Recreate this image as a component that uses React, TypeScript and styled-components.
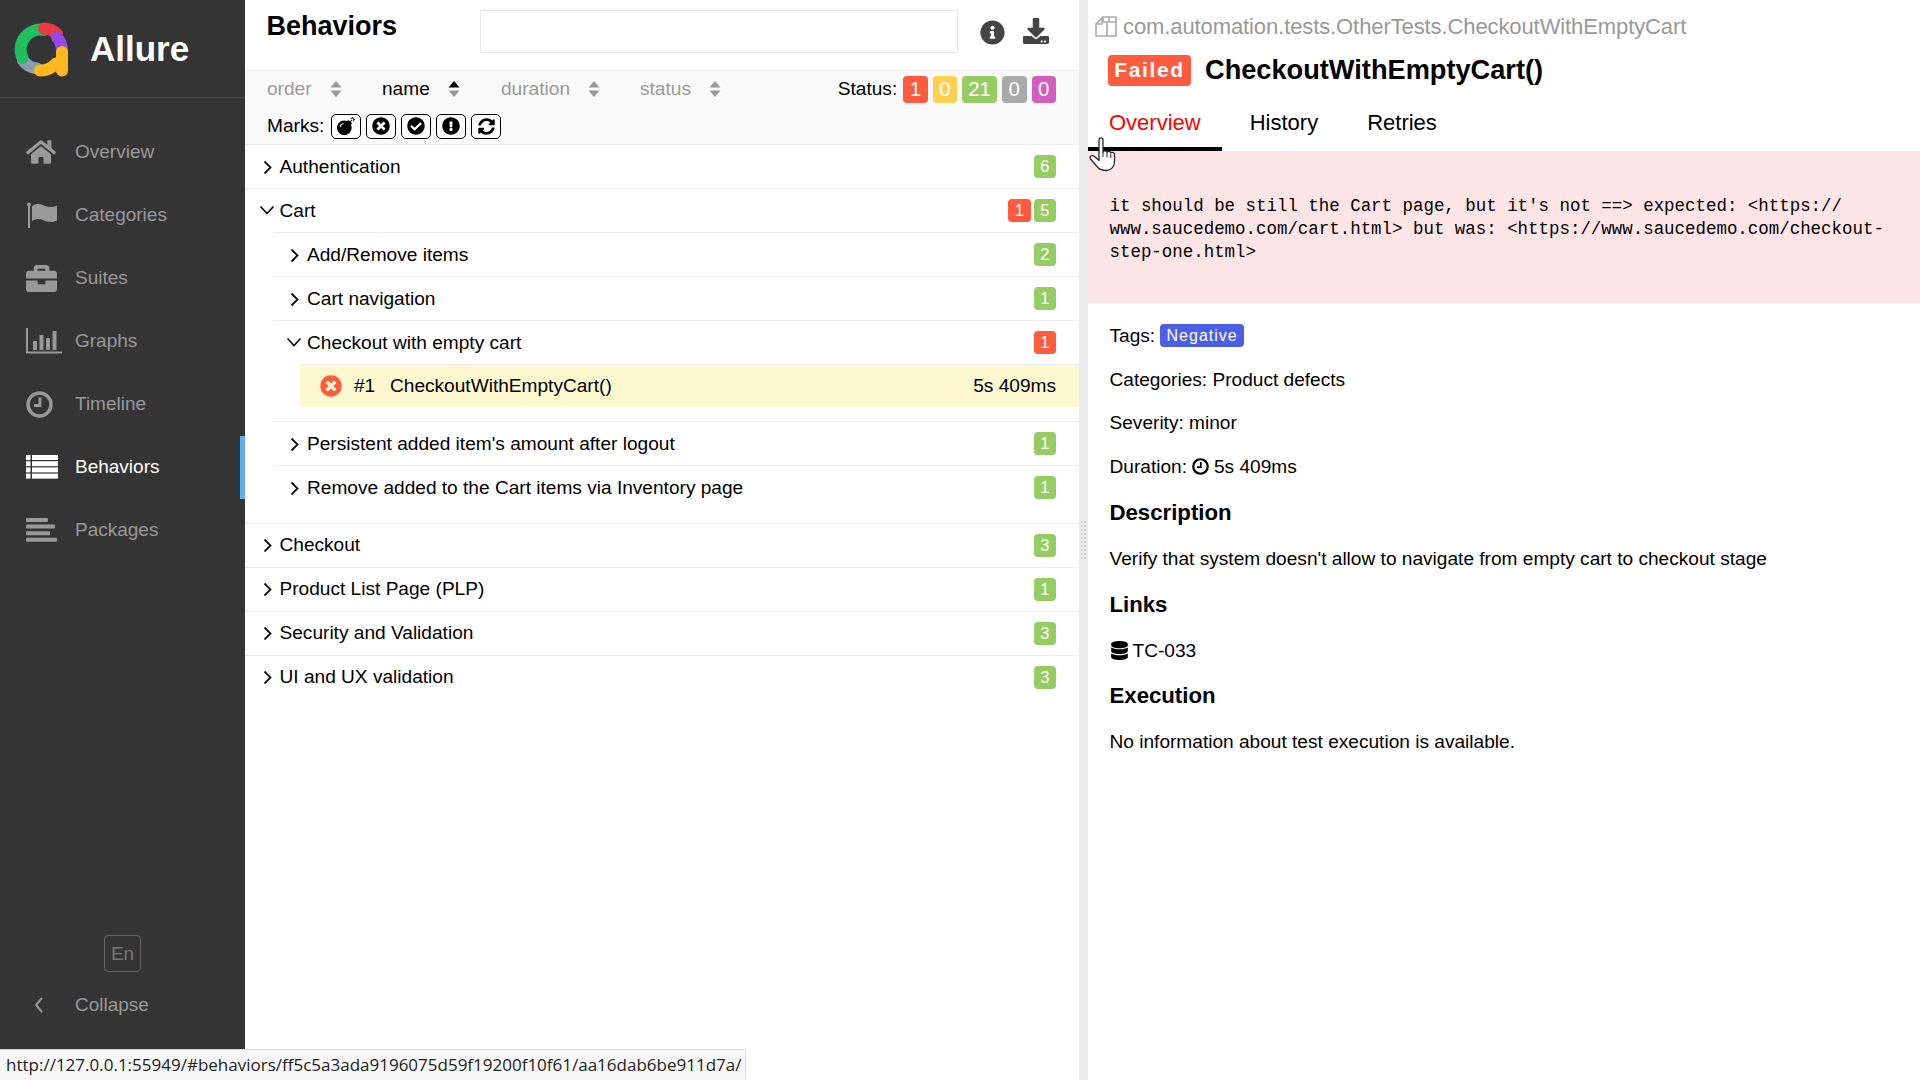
import React from 'react';
import styled, { createGlobalStyle } from 'styled-components';
import { FaHome, FaBriefcase, FaInfoCircle, FaDownload, FaBomb, FaTimesCircle, FaCheckCircle, FaExclamationCircle, FaSyncAlt, FaDatabase } from 'react-icons/fa';

const Global = createGlobalStyle`
  html, body { margin: 0; padding: 0; height: 100%; background: #fff; }
  body { font-family: "Liberation Sans", Arial, sans-serif; font-size: 19.1px; color: #000; }
  * { box-sizing: border-box; }
`;

const Page = styled.div`
  position: relative;
  display: grid;
  grid-template-columns: 245px 834px 9px 1fr;
  width: 1920px;
  height: 1080px;
  overflow: hidden;
`;

/* Sidebar */
const Sidebar = styled.aside`
  display: flex;
  flex-direction: column;
  background: #343434;
  height: 100%;
`;
const Brand = styled.div`
  display: flex;
  align-items: center;
  gap: 21px;
  height: 98px;
  padding-left: 13px;
  border-bottom: 1px solid #4a4a4a;
`;
const BrandName = styled.span`
  color: #fff;
  font-size: 35px;
  font-weight: 700;
  line-height: 1;
`;
const Nav = styled.nav`
  display: flex;
  flex-direction: column;
  padding-top: 22.5px;
`;
const NavItem = styled.div<{ $active?: boolean }>`
  display: flex;
  align-items: center;
  height: 63px;
  padding-left: 26px;
  color: ${p => (p.$active ? '#fff' : '#999')};
  font-size: 19px;
  border-right: 5px solid ${p => (p.$active ? '#5db0f3' : 'transparent')};
`;
const NavIcon = styled.span`
  display: flex;
  align-items: center;
  width: 49px;
  svg { display: block; }
`;
const SideFooter = styled.div`
  margin-top: auto;
  display: flex;
  flex-direction: column;
  padding-bottom: 44px;
`;
const LangBox = styled.div`
  align-self: flex-start;
  margin-left: 104px;
  width: 37px;
  height: 37px;
  display: flex;
  align-items: center;
  justify-content: center;
  color: #777;
  font-size: 19px;
  border: 1px solid #666;
  border-radius: 4px;
  margin-bottom: 1px;
`;
const CollapseIcon = styled.span`
  display: flex;
  width: 49px;
  padding-left: 7px;
`;

/* Main pane */
const Main = styled.main`
  display: flex;
  flex-direction: column;
  min-width: 0;
  background: #fff;
`;
const Header = styled.header`
  display: flex;
  align-items: flex-start;
  height: 70px;
  padding-left: 21.5px;
`;
const Heading = styled.h1`
  margin: 9px 0 0;
  width: 213.5px;
  font-size: 27px;
  line-height: 34px;
  font-weight: 700;
`;
const Search = styled.div`
  margin-top: 10px;
  width: 478px;
  height: 43px;
  border: 1px solid #e6e6e6;
`;
const HeaderIcon = styled.span<{ $gap: number; $top: number }>`
  display: flex;
  margin: ${p => p.$top}px 0 0 ${p => p.$gap}px;
  color: #444;
`;
const Toolbar = styled.div`
  background: #fafafa;
  border-top: 1px solid #e9edf0;
  height: 74px;
`;
const SortRow = styled.div`
  display: flex;
  align-items: center;
  height: 36px;
  margin-bottom: 1px;
  padding: 0 23px 0 22px;
`;
const SortItem = styled.div<{ $w: number; $on?: boolean }>`
  display: flex;
  align-items: center;
  gap: 18px;
  width: ${p => p.$w}px;
  color: ${p => (p.$on ? '#000' : '#999')};
`;
const StatusGroup = styled.div`
  margin-left: auto;
  display: flex;
  align-items: center;
  gap: 5px;
`;
const StatusLabel = styled.span`
  margin-right: 1px;
`;
const Badge = styled.span<{ $c: string }>`
  display: inline-flex;
  align-items: center;
  justify-content: center;
  min-width: 24.5px;
  height: 27px;
  padding: 0 6px;
  background: ${p => p.$c};
  color: #fff;
  font-size: 20.5px;
  border-radius: 4px;
`;
const CountBadge = styled(Badge)`
  min-width: 22.5px;
  height: 23px;
  padding: 0 3px;
  font-size: 16.5px;
`;
const MarksRow = styled.div`
  display: flex;
  align-items: center;
  height: 36px;
  padding-left: 22px;
  gap: 5px;
`;
const MarksLabel = styled.span`
  width: 59px;
`;
const Mark = styled.span`
  display: flex;
  align-items: center;
  justify-content: center;
  width: 30px;
  height: 25px;
  border: 1px solid #000;
  border-radius: 5px;
  background: #fff;
`;
const Row = styled.div`
  display: flex;
  align-items: center;
  height: 44px;
  padding: 0 23px 0 15.5px;
  border-top: 1px solid #e9edf0;
`;
const ChevronBox = styled.span`
  display: flex;
  justify-content: center;
  width: 14px;
  margin-right: 5px;
`;
const RowName = styled.span`
  flex: 1;
`;
const Counts = styled.span`
  display: flex;
  gap: 3px;
`;
const Children = styled.div`
  margin: 0 0 13.5px 27.5px;
`;
const TestRow = styled.div`
  display: flex;
  align-items: center;
  height: 43px;
  margin: 0 0 14px 27.5px;
  padding: 0 23px 0 20px;
  background: #fdf8cf;
  border-top: 1px solid #e9edf0;
`;
const StatusDot = styled.span`
  display: flex;
  width: 34px;
  color: #fd5a3e;
`;
const TestIndex = styled.span`
  width: 36px;
`;
const TreeEnd = styled.div`
  flex: 1;
`;

const Splitter = styled.div`
  background: #e9edf0;
  display: flex;
  align-items: center;
  justify-content: center;
`;
const Grip = styled.span`
  width: 7px;
  height: 40px;
  background-image: radial-gradient(#c9ced2 1px, transparent 1.2px);
  background-size: 3.5px 4px;
`;

/* Detail pane */
const Detail = styled.section`
  display: flex;
  flex-direction: column;
  min-width: 0;
`;
const PathRow = styled.div`
  display: flex;
  align-items: center;
  height: 52px;
  padding: 2px 0 0 7px;
  gap: 6px;
  color: #999;
  font-size: 22px;
  letter-spacing: -0.1px;
`;
const TitleRow = styled.div`
  display: flex;
  align-items: center;
  height: 36px;
  padding-left: 20px;
  gap: 14px;
`;
const FailedBadge = styled.span`
  display: inline-flex;
  align-items: center;
  justify-content: center;
  width: 83px;
  height: 31px;
  background: #fd5a3e;
  color: #fff;
  font-size: 21px;
  font-weight: 700;
  letter-spacing: 1.6px;
  border-radius: 4px;
`;
const TestTitle = styled.h2`
  margin: 0;
  font-size: 27.2px;
  font-weight: 700;
  line-height: 36px;
`;
const Tabs = styled.div`
  display: flex;
  height: 64px;
  border-bottom: 1px solid #e9edf0;
`;
const Tab = styled.div<{ $on?: boolean }>`
  display: flex;
  align-items: center;
  height: 63px;
  padding: 10px 21px 0;
  margin-left: ${p => (p.$on ? '0' : '7px')};
  font-size: 22px;
  color: ${p => (p.$on ? '#f00' : '#000')};
  border-bottom: 4px solid ${p => (p.$on ? '#000' : 'transparent')};
`;
const ErrorBlock = styled.pre`
  margin: 0;
  height: 151px;
  padding: 43px 21.5px 0;
  background: #fde5e5;
  font-family: "Liberation Mono", "DejaVu Sans Mono", monospace;
  font-size: 17.45px;
  line-height: 23px;
  white-space: pre;
`;
const Meta = styled.div`
  margin-top: 11px;
  padding-left: 21.5px;
`;
const MetaRow = styled.div`
  display: flex;
  align-items: center;
  height: 43.7px;
  gap: 5px;
`;
const Tag = styled.span`
  display: inline-flex;
  align-items: center;
  justify-content: center;
  width: 84px;
  height: 23px;
  background: #4a5ee6;
  color: #fff;
  font-size: 16px;
  letter-spacing: 1px;
  border-radius: 4px;
`;
const SectionTitle = styled.h3`
  margin: 0;
  display: flex;
  align-items: center;
  height: 46px;
  font-size: 22.2px;
  font-weight: 700;
  &:first-of-type { margin-top: 1px; }
`;
const Para = styled.div`
  display: flex;
  align-items: center;
  height: 46px;
  gap: 4px;
`;
const LastTitle = styled(SectionTitle)`
  height: 45px;
`;

/* Overlays */
const StatusBar = styled.div`
  position: absolute;
  left: 0;
  bottom: 0;
  width: 746px;
  height: 31px;
  padding: 0 0 2px 6px;
  display: flex;
  align-items: center;
  background: #f8f8f8;
  border: 1px solid #dedede;
  border-left: 0;
  border-bottom: 0;
  color: #222;
  font-family: "Open Sans", sans-serif;
  font-size: 17px;
  white-space: nowrap;
`;
const Cursor = styled.svg`
  position: absolute;
  left: 1089px;
  top: 137px;
`;

const Logo = () => (
  <svg width="56" height="56" viewBox="0 0 56 56" fill="none" strokeLinecap="round" strokeWidth="12">
    <path d="M10 39.500 A20 20 0 0 0 24 47.500" stroke="#8d9bb0" />
    <path d="M9.500 37 A20 20 0 0 1 31 8.900" stroke="#1fbf5f" />
    <path d="M31 7.500 A20 20 0 0 1 44 13" stroke="#ea3a3f" />
    <path d="M44 16.500 A20 20 0 0 1 49 29.500" stroke="#9148ea" />
    <path d="M27 49.500 A21 21 0 0 0 43 42.500" stroke="#ffb81f" />
    <path d="M49 31 V49.500" stroke="#ffb81f" />
  </svg>
);

const FlagIcon = () => (
  <svg width="32" height="26" viewBox="0 0 32 26" fill="currentColor">
    <rect x="2" y="2" width="2" height="24" />
    <circle cx="3" cy="2.500" r="2" />
    <path d="M6 4c5-3 9-2 13 0 4 1.500 8 1.500 12-.5v15c-4 2-8 2-12 .5-4-2-8-3-13 0z" />
  </svg>
);
const GraphIcon = () => (
  <svg width="36" height="26" viewBox="0 0 36 26" fill="currentColor">
    <path d="M0 0h2v23.500h34V25.500H0z" />
    <rect x="7" y="13" width="4" height="9" />
    <rect x="13.500" y="7" width="4" height="15" />
    <rect x="20" y="10" width="4" height="12" />
    <rect x="26.500" y="3" width="4" height="19" />
  </svg>
);
const ListIcon = () => (
  <svg width="32" height="24" viewBox="0 0 32 24" fill="currentColor">
    {[0, 6.200, 12.400, 18.600].map(y => (
      <React.Fragment key={y}>
        <rect x="0" y={y} width="4.500" height="5" />
        <rect x="6" y={y} width="26" height="5" />
      </React.Fragment>
    ))}
  </svg>
);
const BarsIcon = () => (
  <svg width="32" height="24" viewBox="0 0 32 24" fill="currentColor">
    <rect x="0" y="0" width="22" height="4" rx="1" />
    <rect x="0" y="6.600" width="29" height="4" rx="1" />
    <rect x="0" y="13.200" width="24" height="4" rx="1" />
    <rect x="0" y="19.800" width="31" height="4" rx="1" />
  </svg>
);
const ClockIcon = ({ size = 27 }: { size?: number }) => (
  <svg width={size} height={size} viewBox="0 0 27 27" fill="none" stroke="currentColor">
    <circle cx="13.500" cy="13.500" r="11.500" strokeWidth="3.500" />
    <path d="M14 6.500v8H8" strokeWidth="2.800" />
  </svg>
);
const SortIcon = ({ up }: { up?: boolean }) => (
  <svg width="12" height="18" viewBox="0 0 12 18">
    <path d="M6 1l5.500 6.500H.500z" fill={up ? '#000' : '#999'} />
    <path d="M6 17l5.500-6.500H.500z" fill="#999" />
  </svg>
);
const Chevron = ({ open }: { open?: boolean }) => (
  <svg width="14" height="16" viewBox="0 0 14 16" fill="none" stroke="#111" strokeWidth="1.800" style={{ overflow: 'visible' }}>
    {open ? <path d="M-.5 3.500L6 10.500l6.500-7" /> : <path d="M3.500 2.500L9.500 8.500l-6 6" />}
  </svg>
);
const CopyIcon = () => (
  <svg width="22" height="24" viewBox="0 0 22 24" fill="none" stroke="#aaa" strokeWidth="1.600">
    <path d="M8 7V2h6l7 0v19h-9" />
    <path d="M1 9l6-6v6zM1 9v12h11V7H7" />
    <path d="M14 2v5h7" />
  </svg>
);
const HandCursor = () => (
  <Cursor width="27" height="35" viewBox="0 0 27 35">
    <path
      d="M10 3c0-2.800 4-2.800 4 0v12c.5-1.500 4-1.500 4 .5 .5-1.500 3.500-1.500 3.800.5 .5-1 3.700-1 3.700 1.500v7c0 5-3.500 9-8 9-4 0-6.500-.5-9-3.500L1.500 22c-1.500-2.500 1.500-4.500 4-2.500L10 23.500z"
      fill="#fff"
      stroke="#222436"
      strokeWidth="1.300"
      strokeLinejoin="round"
    />
    <path d="M14 15v5M18 15.500v5M21.800 17v4" stroke="#222436" strokeWidth="1" fill="none" />
  </Cursor>
);

const RED = '#fd5a3e';
const GREEN = '#97cc64';
const Count = ({ failed, passed }: { failed?: number; passed?: number }) => (
  <Counts>
    {failed ? <CountBadge $c={RED}>{failed}</CountBadge> : null}
    {passed ? <CountBadge $c={GREEN}>{passed}</CountBadge> : null}
  </Counts>
);

const TreeRow = ({ name, open, failed, passed }: { name: string; open?: boolean; failed?: number; passed?: number }) => (
  <Row>
    <ChevronBox><Chevron open={open} /></ChevronBox>
    <RowName>{name}</RowName>
    <Count failed={failed} passed={passed} />
  </Row>
);

export default function App() {
  return (
    <Page>
      <Global />
      <Sidebar>
        <Brand><Logo /><BrandName>Allure</BrandName></Brand>
        <Nav>
          <NavItem><NavIcon><FaHome size={30} /></NavIcon>Overview</NavItem>
          <NavItem><NavIcon><FlagIcon /></NavIcon>Categories</NavItem>
          <NavItem><NavIcon><FaBriefcase size={31} /></NavIcon>Suites</NavItem>
          <NavItem><NavIcon><GraphIcon /></NavIcon>Graphs</NavItem>
          <NavItem><NavIcon><ClockIcon /></NavIcon>Timeline</NavItem>
          <NavItem $active><NavIcon><ListIcon /></NavIcon>Behaviors</NavItem>
          <NavItem><NavIcon><BarsIcon /></NavIcon>Packages</NavItem>
        </Nav>
        <SideFooter>
          <LangBox>En</LangBox>
          <NavItem>
            <CollapseIcon>
              <svg width="12" height="18" viewBox="0 0 12 18" fill="none" stroke="#999" strokeWidth="2"><path d="M9 2L3 9l6 7" /></svg>
            </CollapseIcon>
            Collapse
          </NavItem>
        </SideFooter>
      </Sidebar>

      <Main>
        <Header>
          <Heading>Behaviors</Heading>
          <Search />
          <HeaderIcon $gap={22} $top={20}><FaInfoCircle size={25} /></HeaderIcon>
          <HeaderIcon $gap={18} $top={18}><FaDownload size={26} /></HeaderIcon>
        </Header>
        <Toolbar>
          <SortRow>
            <SortItem $w={115}>order<SortIcon /></SortItem>
            <SortItem $w={119} $on>name<SortIcon up /></SortItem>
            <SortItem $w={139}>duration<SortIcon /></SortItem>
            <SortItem $w={100}>status<SortIcon /></SortItem>
            <StatusGroup>
              <StatusLabel>Status:</StatusLabel>
              <Badge $c={RED}>1</Badge>
              <Badge $c="#ffd050">0</Badge>
              <Badge $c={GREEN}>21</Badge>
              <Badge $c="#aaa">0</Badge>
              <Badge $c="#d35ebe">0</Badge>
            </StatusGroup>
          </SortRow>
          <MarksRow>
            <MarksLabel>Marks:</MarksLabel>
            <Mark><FaBomb size={18} /></Mark>
            <Mark><FaTimesCircle size={18} /></Mark>
            <Mark><FaCheckCircle size={18} /></Mark>
            <Mark><FaExclamationCircle size={18} /></Mark>
            <Mark><FaSyncAlt size={17} /></Mark>
          </MarksRow>
        </Toolbar>
        <TreeRow name="Authentication" passed={6} />
        <TreeRow name="Cart" open failed={1} passed={5} />
        <Children>
          <TreeRow name="Add/Remove items" passed={2} />
          <TreeRow name="Cart navigation" passed={1} />
          <TreeRow name="Checkout with empty cart" open failed={1} />
          <TestRow>
            <StatusDot><FaTimesCircle size={22} /></StatusDot>
            <TestIndex>#1</TestIndex>
            <RowName>CheckoutWithEmptyCart()</RowName>
            <span>5s 409ms</span>
          </TestRow>
          <TreeRow name="Persistent added item's amount after logout" passed={1} />
          <TreeRow name="Remove added to the Cart items via Inventory page" passed={1} />
        </Children>
        <TreeRow name="Checkout" passed={3} />
        <TreeRow name="Product List Page (PLP)" passed={1} />
        <TreeRow name="Security and Validation" passed={3} />
        <TreeRow name="UI and UX validation" passed={3} />
        <TreeEnd />
      </Main>

      <Splitter><Grip /></Splitter>

      <Detail>
        <PathRow><CopyIcon />com.automation.tests.OtherTests.CheckoutWithEmptyCart</PathRow>
        <TitleRow>
          <FailedBadge>Failed</FailedBadge>
          <TestTitle>CheckoutWithEmptyCart()</TestTitle>
        </TitleRow>
        <Tabs>
          <Tab $on>Overview</Tab>
          <Tab>History</Tab>
          <Tab>Retries</Tab>
        </Tabs>
        <ErrorBlock>{`it should be still the Cart page, but it's not ==> expected: <https://
www.saucedemo.com/cart.html> but was: <https://www.saucedemo.com/checkout-
step-one.html>`}</ErrorBlock>
        <Meta>
          <MetaRow>Tags: <Tag>Negative</Tag></MetaRow>
          <MetaRow>Categories: Product defects</MetaRow>
          <MetaRow>Severity: minor</MetaRow>
          <MetaRow>Duration: <ClockIcon size={17} /> 5s 409ms</MetaRow>
          <SectionTitle>Description</SectionTitle>
          <Para>Verify that system doesn't allow to navigate from empty cart to checkout stage</Para>
          <SectionTitle>Links</SectionTitle>
          <Para><FaDatabase size={19} />TC-033</Para>
          <LastTitle>Execution</LastTitle>
          <Para>No information about test execution is available.</Para>
        </Meta>
      </Detail>

      <HandCursor />
      <StatusBar>http://127.0.0.1:55949/#behaviors/ff5c5a3ada9196075d59f19200f10f61/aa16dab6be911d7a/</StatusBar>
    </Page>
  );
}
